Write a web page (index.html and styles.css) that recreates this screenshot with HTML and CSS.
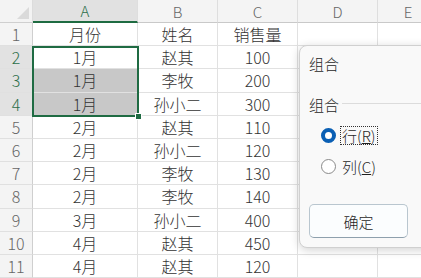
FILE: index.html
```html
<!DOCTYPE html>
<html>
<head>
<meta charset="utf-8">
<link rel="stylesheet" href="styles.css">
</head>
<body>
<div class="sheet">
  <div class="grid">
    <div class="corner"><div class="tri"></div></div>
    <div class="ch sel">A</div><div class="ch">B</div><div class="ch">C</div><div class="ch">D</div><div class="ch last">E</div>

    <div class="rh">1</div><div class="c">月份</div><div class="c">姓名</div><div class="c">销售量</div><div class="c"></div><div class="c"></div>
    <div class="rh sel">2</div><div class="c">1月</div><div class="c">赵其</div><div class="c">100</div><div class="c"></div><div class="c"></div>
    <div class="rh sel">3</div><div class="c fill">1月</div><div class="c">李牧</div><div class="c">200</div><div class="c"></div><div class="c"></div>
    <div class="rh sel">4</div><div class="c fill">1月</div><div class="c">孙小二</div><div class="c">300</div><div class="c"></div><div class="c"></div>
    <div class="rh">5</div><div class="c">2月</div><div class="c">赵其</div><div class="c">110</div><div class="c"></div><div class="c"></div>
    <div class="rh">6</div><div class="c">2月</div><div class="c">孙小二</div><div class="c">120</div><div class="c"></div><div class="c"></div>
    <div class="rh">7</div><div class="c">2月</div><div class="c">李牧</div><div class="c">130</div><div class="c"></div><div class="c"></div>
    <div class="rh">8</div><div class="c">2月</div><div class="c">李牧</div><div class="c">140</div><div class="c"></div><div class="c"></div>
    <div class="rh">9</div><div class="c">3月</div><div class="c">孙小二</div><div class="c">400</div><div class="c"></div><div class="c"></div>
    <div class="rh">10</div><div class="c">4月</div><div class="c">赵其</div><div class="c">450</div><div class="c"></div><div class="c"></div>
    <div class="rh">11</div><div class="c">4月</div><div class="c">赵其</div><div class="c">120</div><div class="c"></div><div class="c"></div>
  </div>
  <div class="selection"><div class="handle"></div></div>

  <div class="dialog">
    <div class="title">组合</div>
    <div class="group">
      <span class="glabel">组合</span><span class="gline"></span>
    </div>
    <div class="opts">
      <div class="opt"><span class="radio on"></span><span class="otext focus">行(<u>R</u>)</span></div>
      <div class="opt"><span class="radio"></span><span class="otext">列(<u>C</u>)</span></div>
    </div>
    <div class="btns"><div class="btn">确定</div></div>
  </div>
</div>
</body>
</html>
```

FILE: styles.css
```css
* { box-sizing: border-box; }
html, body { margin: 0; padding: 0; }
body {
  width: 421px; height: 278px; overflow: hidden; background: #fff;
  font-family: "Noto Sans CJK SC", "Noto Sans", sans-serif;
  font-weight: 300;
}
.sheet { position: relative; width: 421px; height: 278px; overflow: hidden; }
.grid {
  display: grid;
  grid-template-columns: 33px 105px 80px 80px 80px 60px;
  grid-template-rows: 23px repeat(11, 23.2px);
}
.corner { background: #f3f3f3; border-right: 1px solid #dcdcdc; border-bottom: 1px solid #cfcfcf; position: relative; }
.tri {
  position: absolute; right: 3px; bottom: 3px; width: 0; height: 0;
  border-left: 12px solid transparent; border-bottom: 12px solid #dadada;
}
.ch {
  background: #f4f4f4; border-right: 1px solid #dedede; border-bottom: 1px solid #c9c9c9;
  display: flex; align-items: center; justify-content: center;
  font-size: 15px; color: #666; line-height: 1;
}
.ch.sel { background: #e1e1e1; color: #2c6e49; border-bottom: 2px solid #1e6b41; }
.ch.last { border-right: 0; }
.rh {
  background: #f4f4f4; border-right: 1px solid #cfcfcf; border-bottom: 1px solid #e0e0e0;
  display: flex; align-items: center; justify-content: center;
  font-size: 16px; color: #666; line-height: 1;
}
.rh.sel { background: #e2e2e2; color: #2c6e49; }
.c {
  border-right: 1px solid #e1e1e1; border-bottom: 1px solid #e1e1e1;
  display: flex; align-items: center; justify-content: center;
  font-size: 16px; color: #333; line-height: 1;
}
.c.fill { background: #c8c8c8; }
.selection {
  position: absolute; left: 32px; top: 45.5px; width: 107px; height: 71px;
  border: 2px solid #1f6b43;
}
.handle {
  position: absolute; right: -5px; bottom: -5px; width: 7px; height: 7px;
  background: #1f6b43; border: 1px solid #fff;
}
.dialog {
  position: absolute; left: 299px; top: 45px; width: 140px; height: 203px;
  background: #f9f9f9; border: 1px solid #d0d0d0; border-radius: 8px;
  box-shadow: 0 2px 10px rgba(0,0,0,0.18);
  padding: 8px 0 0 9px;
  display: flex; flex-direction: column;
  font-size: 15px; color: #1f1f1f;
}
.title { line-height: 20px; height: 20px; }
.group { display: flex; align-items: center; margin-top: 21px; height: 20px; }
.glabel { line-height: 20px; }
.gline { flex: 1; height: 1px; background: #dcdcdc; margin-left: 3px; margin-top: -4px; }
.opts { display: flex; flex-direction: column; gap: 11px; margin-top: 10px; padding-left: 12px; }
.opt { display: flex; align-items: center; height: 20px; }
.radio {
  width: 15px; height: 15px; border-radius: 50%;
  border: 1px solid #8a8a8a; background: #fff; margin-right: 4px; flex: none;
}
.radio.on { background: #fff; border: 4.5px solid #0a5fb4; }
.otext { line-height: 17px; padding: 0 1px; border: 1px solid transparent; }
.otext.focus { border: 1px dotted #333; }
.btns { margin-top: 28px; }
.btn {
  width: 99px; height: 34px; border: 1px solid #b9c6cf; border-bottom-color: #8ea0ad; border-radius: 5px;
  background: #fbfdfe; display: flex; align-items: center; justify-content: center;
  font-size: 15px; color: #1f1f1f;
}
```
